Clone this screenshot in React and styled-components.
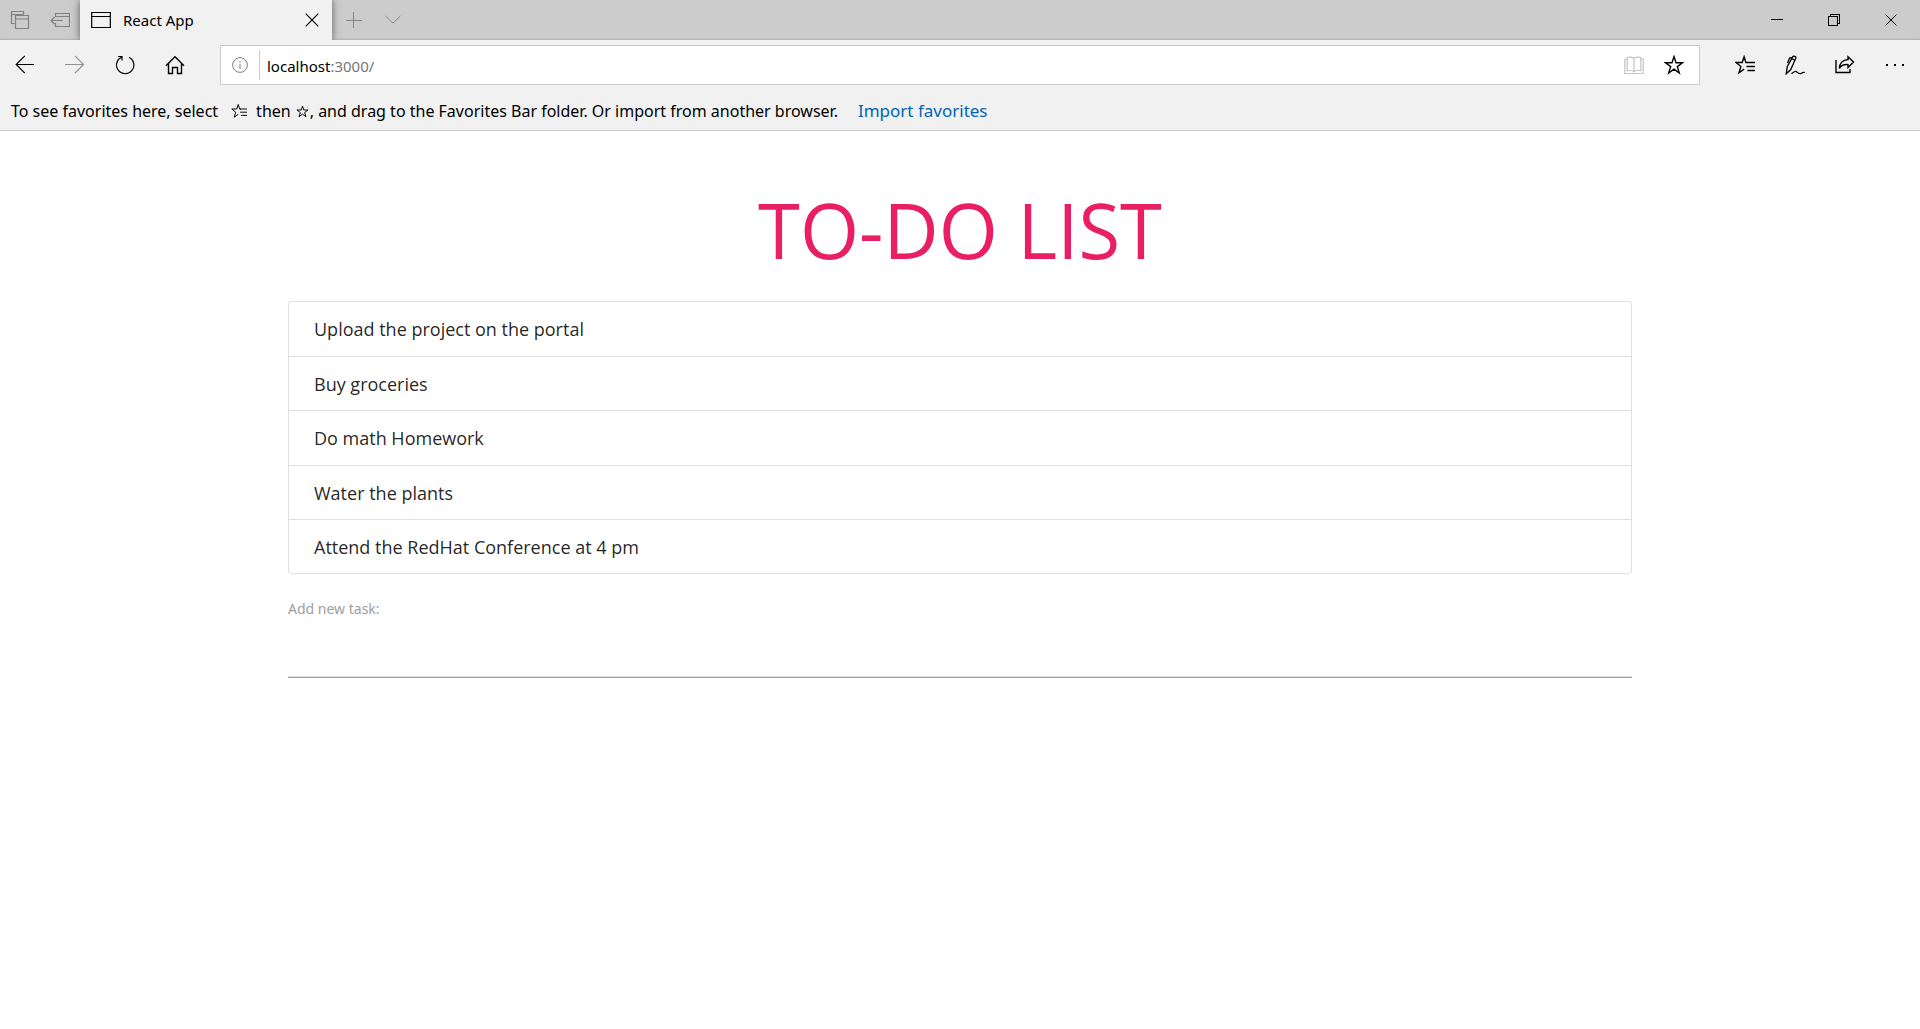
import React from 'react';
import styled, { createGlobalStyle } from 'styled-components';

const GlobalStyle = createGlobalStyle`
  *, *::before, *::after { box-sizing: border-box; }
  body {
    margin: 0;
    background: #fff;
    color: #000;
    font-family: "Open Sans", "Noto Sans", sans-serif;
  }
  button { font: inherit; color: inherit; background: none; border: 0; padding: 0; }
`;

/* ---------- browser chrome ---------- */

const Chrome = styled.header`
  background: #f1f1f1;
  border-bottom: 1px solid #ccc;
  font-family: "Noto Sans", "Open Sans", sans-serif;
`;

const TitleBar = styled.div`
  display: flex;
  height: 40px;
  background: #ccc;
  overflow: hidden;
  box-shadow: inset 0 -2px 2px -1px rgba(0, 0, 0, 0.14);
`;

const TabTools = styled.div`
  display: flex;
  align-items: center;
  gap: 20px;
  width: 80px;
  padding-left: 10px;
  color: #828282;
`;

const IconButton = styled.button`
  display: flex;
  align-items: center;
  justify-content: center;
  width: ${(p) => p.$width || 20}px;
  height: ${(p) => p.$height || 40}px;
  color: ${(p) => p.$color || 'inherit'};
`;

const Tab = styled.div`
  display: flex;
  align-items: center;
  width: 252px;
  padding: 0 10px 0 11px;
  background: #f1f1f1;
  box-shadow: 0 0 8px rgba(0, 0, 0, 0.55);
`;

const TabTitle = styled.span`
  flex: 1;
  margin-left: 12px;
  font-size: 15px;
  line-height: 20px;
`;

const TabActions = styled.div`
  display: flex;
  flex: 1;
  align-items: center;
  gap: 19px;
  padding-left: 12px;
  color: #828282;
`;

const WindowControls = styled.div`
  display: flex;
  padding-right: 1px;
`;

const NavBar = styled.div`
  display: flex;
  align-items: center;
  height: 50px;
`;

const AddressBar = styled.div`
  display: flex;
  flex: 1;
  align-items: center;
  height: 40px;
  margin: 0 20px;
  padding-right: 5px;
  border: 1px solid #ccc;
  background: #fff;
`;

const Divider = styled.span`
  width: 1px;
  height: 30px;
  margin-right: 7px;
  background: #ccc;
`;

const Url = styled.p`
  flex: 1;
  margin: 0;
  padding-top: 2px;
  font-size: 15px;
  line-height: 20px;
  color: #767676;
`;

const Host = styled.span`
  color: #000;
`;

const FavoritesBar = styled.p`
  display: flex;
  align-items: center;
  height: 40px;
  margin: 0;
  padding: 2px 11px 0;
  font-size: 16px;
  line-height: 24px;
  white-space: pre;

  svg { flex: none; }
`;

const HubHint = styled.span`
  display: flex;
  margin: 0 9px 0 13px;
`;

const StarHint = styled.span`
  display: flex;
  margin: 0 1px 0 5px;
`;

const ImportLink = styled.a`
  margin-left: 20px;
  color: #0063b8;
  font-size: 17px;
  text-decoration: none;
`;

/* ---------- page ---------- */

const Main = styled.main`
  width: 70%;
  margin: 0 auto;
  padding-top: 43px;
`;

const Title = styled.h1`
  margin: 0;
  color: #e91e63;
  font-size: 76px;
  font-weight: 400;
  line-height: 112px;
  text-align: center;
`;

const TaskList = styled.ul`
  display: grid;
  grid-auto-rows: 1fr;
  min-height: 273px;
  margin: 15px 0 0;
  padding: 0;
  border: 1px solid #e0e0e0;
  border-radius: 3px;
  list-style: none;
`;

const Task = styled.li`
  padding: 13px 25px 11px;
  color: rgba(0, 0, 0, 0.87);
  font-size: 18px;
  line-height: 29px;

  & + & { border-top: 1px solid #e0e0e0; }
`;

const Form = styled.form`
  display: flex;
  flex-direction: column;
  margin-top: 24px;
`;

const Label = styled.label`
  color: #9e9e9e;
  font-family: "Noto Sans", "Open Sans", sans-serif;
  font-size: 14px;
  line-height: 22px;
`;

const TaskInput = styled.input`
  height: 58px;
  padding: 0;
  border: 0;
  border-bottom: 1px solid #9e9e9e;
  outline: 0;
  background: transparent;
  box-shadow: inset 0 -1px 0 #e0e0e0;
  font: inherit;
`;

/* ---------- icons ---------- */

const Icon = ({ size = 20, w = 1.2, children }) => (
  <svg width={size} height={size} viewBox="0 0 20 20" fill="none" stroke="currentColor" strokeWidth={w} aria-hidden="true">
    {children}
  </svg>
);

const StarIcon = ({ size, w }) => (
  <Icon size={size} w={w}>
    <path d="M10 1.600l2 6.100h6.600l-5.300 3.900 2 6.400-5.300-3.900-5.300 3.900 2-6.400L1.400 7.700H8z" />
  </Icon>
);

const HubIcon = ({ size, w }) => (
  <Icon size={size} w={w}>
    <path d="M12.500 7.500h-1.600L9.100 1.800 7.200 7.500H1l4.900 4-1.900 6.300 5.100-3.700M10.900 7.500H20M11.500 11.500H20M12.500 15.500H20" />
  </Icon>
);

const TabsAsideIcon = () => (
  <Icon><path d="M4.500 13.500h-3v-12h12v3M1.500 4.500h12M5.500 5.500h13v13h-13zM5.500 9h13" /></Icon>
);
const SetAsideIcon = () => (
  <Icon><path d="M5.500 7V3.500h14v13h-14V13M5.500 6.500h14M1 10.500h12M4.500 7L1 10.500 4.500 14" /></Icon>
);
const WindowIcon = () => (
  <Icon><path d="M.7 2.500h18.600v15H.7zM.7 6.500h18.600" /></Icon>
);
const CloseIcon = ({ size = 14 }) => <Icon size={size} w="1.6"><path d="M1 1l18 18M19 1L1 19" /></Icon>;
const PlusIcon = () => <Icon size={16}><path d="M9.400 0v20M0 10.600h20" /></Icon>;
const ChevronIcon = () => <Icon size={16}><path d="M.8 5l9.200 9 9.200-9" /></Icon>;
const MinimizeIcon = () => <Icon size={12} w="1.7"><path d="M0 9.200h20" /></Icon>;
const RestoreIcon = () => <Icon size={12} w="1.7"><path d="M.8 4.200h15v15h-15zM4.200 4V.8h15v15H16" /></Icon>;
const BackIcon = () => <Icon><path d="M19 9.500H1.200M9.800.9L1.200 9.500l8.600 8.600" /></Icon>;
const ForwardIcon = () => <Icon><path d="M0 9.500h18.300M10 .9l8.600 8.600-8.600 8.600" /></Icon>;
const RefreshIcon = () => (
  <Icon><path d="M14 2.200a8.700 8.700 0 1 1-7.600 0M3 1.500h4v4" /></Icon>
);
const HomeIcon = () => (
  <Icon w="1.4"><path d="M1 10.800l9-9 9 9M3.500 8.600v9.900h4v-6h5v6h4V8.600" /></Icon>
);
const InfoIcon = () => (
  <Icon size={16}><circle cx="10" cy="10" r="9.200" /><path d="M10 8.500V15M10 5v1.800" /></Icon>
);
const BookIcon = () => (
  <Icon><path d="M10 3.500C8.500 2 5 1.800 3.200 2.500v13.300c2-.7 5.300-.5 6.800 1 1.500-1.500 4.800-1.700 6.800-1V2.500C15 1.800 11.500 2 10 3.500zM10 3.500v13.300M3.200 4H.8v14.500h18.400V4h-2.400" /></Icon>
);
const NotesIcon = () => (
  <Icon w="1.3">
    <path d="M1.200 18.800l1-7L7.800 1.600c.7-1.200 3.600.2 3 1.700L5.600 14.800 1.200 18.800zM6.800 2.600L4.600 3 2.500 8M6.800 3.600l3 1.600M6.500 18.800c2.500-2.300 4.400-3 5.600-1.700 1.400 1.400 2.800 2.100 4.300 1.100 1-.7 2-1.200 3.400-.7" />
  </Icon>
);
const ShareIcon = () => (
  <Icon w="1.4"><path d="M1 5v12.500h14V14M13 1.800l5.500 5.200-5.500 5.500V9.600c-4-.3-7 1-8.700 3.700.4-5.300 3.800-8.300 8.700-8.700z" /></Icon>
);
const MoreIcon = () => (
  <Icon><path fill="currentColor" stroke="none" d="M1 9h2v2H1zM9 9h2v2H9zM17 9h2v2h-2z" /></Icon>
);

const tasks = [
  'Upload the project on the portal',
  'Buy groceries',
  'Do math Homework',
  'Water the plants',
  'Attend the RedHat Conference at 4 pm',
];

export default function App() {
  return (
    <>
      <GlobalStyle />
      <Chrome>
        <TitleBar>
          <TabTools>
            <IconButton aria-label="Tabs you've set aside"><TabsAsideIcon /></IconButton>
            <IconButton aria-label="Set these tabs aside"><SetAsideIcon /></IconButton>
          </TabTools>
          <Tab>
            <WindowIcon />
            <TabTitle>React App</TabTitle>
            <IconButton aria-label="Close tab"><CloseIcon /></IconButton>
          </Tab>
          <TabActions>
            <IconButton aria-label="New tab"><PlusIcon /></IconButton>
            <IconButton aria-label="Show tab previews"><ChevronIcon /></IconButton>
          </TabActions>
          <WindowControls>
            <IconButton $width={57} aria-label="Minimize"><MinimizeIcon /></IconButton>
            <IconButton $width={57} aria-label="Restore"><RestoreIcon /></IconButton>
            <IconButton $width={57} aria-label="Close"><CloseIcon size={12} /></IconButton>
          </WindowControls>
        </TitleBar>

        <NavBar>
          <IconButton $width={50} aria-label="Back"><BackIcon /></IconButton>
          <IconButton $width={50} $color="#919191" aria-label="Forward"><ForwardIcon /></IconButton>
          <IconButton $width={50} aria-label="Refresh"><RefreshIcon /></IconButton>
          <IconButton $width={50} aria-label="Home"><HomeIcon /></IconButton>
          <AddressBar>
            <IconButton $width={38} $height={38} $color="#767676" aria-label="Site information"><InfoIcon /></IconButton>
            <Divider />
            <Url><Host>localhost</Host>:3000/</Url>
            <IconButton $width={40} $height={38} $color="#c4c4c4" aria-label="Reading view"><BookIcon /></IconButton>
            <IconButton $width={40} $height={38} aria-label="Add to favorites"><StarIcon w="1.4" /></IconButton>
          </AddressBar>
          <IconButton $width={50} aria-label="Favorites hub"><HubIcon w="1.4" /></IconButton>
          <IconButton $width={50} aria-label="Add notes"><NotesIcon /></IconButton>
          <IconButton $width={50} aria-label="Share"><ShareIcon /></IconButton>
          <IconButton $width={50} aria-label="More"><MoreIcon /></IconButton>
        </NavBar>

        <FavoritesBar>
          <span>To see favorites here, select</span>
          <HubHint><HubIcon size={16} w="1.2" /></HubHint>
          <span>then</span>
          <StarHint><StarIcon size={13} w="1.5" /></StarHint>
          <span>, and drag to the Favorites Bar folder. Or import from another browser.</span>
          <ImportLink href="#import">Import favorites</ImportLink>
        </FavoritesBar>
      </Chrome>

      <Main>
        <Title>TO-DO LIST</Title>
        <TaskList>
          {tasks.map((task) => <Task key={task}>{task}</Task>)}
        </TaskList>
        <Form>
          <Label htmlFor="new-task">Add new task:</Label>
          <TaskInput id="new-task" type="text" />
        </Form>
      </Main>
    </>
  );
}
